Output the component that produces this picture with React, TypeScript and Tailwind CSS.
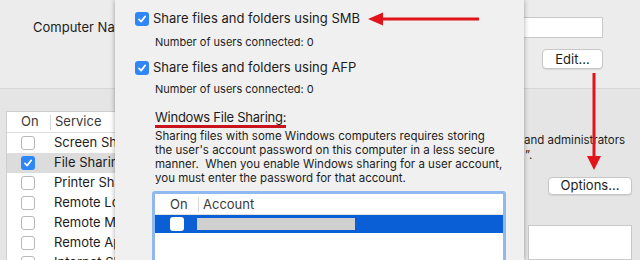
import React from 'react';

const font = { fontFamily: 'Inter, "Liberation Sans", Arial, sans-serif' };

const CheckBox: React.FC<{ checked?: boolean }> = ({ checked }) =>
  checked ? (
    <span className="flex h-[14px] w-[14px] shrink-0 items-center justify-center rounded-[3px] bg-[#2f86f6]">
      <svg width="10" height="10" viewBox="0 0 10 10">
        <path d="M2 5.4 L4.1 7.6 L8.2 2.4" fill="none" stroke="#fff" strokeWidth="1.7" strokeLinecap="round" strokeLinejoin="round" />
      </svg>
    </span>
  ) : (
    <span className="block h-[14px] w-[14px] shrink-0 rounded-[3px] border border-[#b9b9b9] bg-white" />
  );

const services = [
  { name: 'Screen Sharing', on: false },
  { name: 'File Sharing', on: true },
  { name: 'Printer Sharing', on: false },
  { name: 'Remote Login', on: false },
  { name: 'Remote Management', on: false },
  { name: 'Remote Apple Events', on: false },
  { name: 'Internet Sharing', on: false },
];

const App: React.FC = () => {
  return (
    <div className="relative h-[260px] w-[640px] overflow-hidden text-[#1c1c1c]" style={font}>
      {/* window behind the sheet */}
      <div className="h-[89px] border-b border-[#d6d6d6] bg-[#ececec]">
        <div className="flex items-center pt-[17px]">
          <span className="ml-[33px] text-[13px]">Computer Name:</span>
          <div className="ml-[10px] h-[21px] w-[456px] border border-[#c9c9c9] bg-white" />
        </div>
        <div className="mt-[11px] flex justify-end pr-[37px]">
          <button className="h-[20px] w-[61px] rounded-[4px] border border-[#c6c6c6] bg-white text-[13px] leading-none shadow-[0_1px_1px_rgba(0,0,0,0.08)]">
            Edit...
          </button>
        </div>
      </div>
      <div className="flex h-[171px] bg-[#e5e5e5]">
        <div className="ml-[6px] mt-[22px] w-[320px] self-start border-l border-t border-[#cfcfcf] bg-white">
          <div className="flex h-[21px] items-center border-b border-[#dedede] text-[13px] text-[#3a3a3a]">
            <span className="ml-[14px] w-[29px]">On</span>
            <span className="h-[15px] w-px bg-[#d8d8d8]" />
            <span className="ml-[4px]">Service</span>
          </div>
          {services.map((s) => (
            <div key={s.name} className={`flex h-[20px] items-center text-[13px] ${s.on ? 'bg-[#dcdcdc]' : ''}`}>
              <span className="ml-[14px]">
                <CheckBox checked={s.on} />
              </span>
              <span className="ml-[19px] whitespace-nowrap">{s.name}</span>
            </div>
          ))}
        </div>
        <div className="ml-[198px] flex w-[116px] flex-col">
          <div className="pt-[44px] text-[11.5px] leading-[15px] whitespace-nowrap">
            <div>and administrators</div>
            <div className="ml-[1px]">”.</div>
          </div>
          <button className="ml-[24px] mt-[14px] h-[20px] w-[84px] rounded-[4px] border border-[#c6c6c6] bg-white text-[13px] leading-none shadow-[0_1px_1px_rgba(0,0,0,0.08)]">
            Options...
          </button>
          <div className="ml-[4px] mt-[30px] h-[40px] w-[104px] border border-[#c9c9c9] bg-white" />
        </div>
      </div>

      {/* sheet */}
      <div className="absolute left-[115px] top-0 h-[260px] w-[409px] bg-[#f0f0f0] shadow-[0_0_5px_rgba(0,0,0,0.35)]">
        <div className="pl-[20px]">
          <div className="mt-[12px] flex h-[14px] items-center gap-[4px]">
            <CheckBox checked />
            <span className="text-[13px]">Share files and folders using SMB</span>
          </div>
          <div className="ml-[20px] mt-[9px] text-[11px] leading-[14px]">Number of users connected: 0</div>
          <div className="mt-[12px] flex h-[14px] items-center gap-[4px]">
            <CheckBox checked />
            <span className="text-[13px]">Share files and folders using AFP</span>
          </div>
          <div className="ml-[20px] mt-[7px] text-[11px] leading-[14px]">Number of users connected: 0</div>
          <div className="ml-[20px] mt-[13px] flex">
            <span className="border-b-[3px] border-[#c8141c] text-[13px] leading-[16px] tracking-[-0.25px]">Windows File Sharing:</span>
          </div>
          <div className="ml-[20px] mt-[1px] text-[11.5px] leading-[14px] whitespace-nowrap">
            <div>Sharing files with some Windows computers requires storing</div>
            <div>the user's account password on this computer in a less secure</div>
            <div>manner.&nbsp; When you enable Windows sharing for a user account,</div>
            <div>you must enter the password for that account.</div>
          </div>
          <div className="ml-[17px] mt-[6px] h-[80px] w-[354px] rounded-[3px] border-[3px] border-[#8fb9ef] bg-white">
            <div className="flex h-[21px] items-center border-b border-[#e1e1e1] text-[13px] leading-[16px] text-[#3a3a3a]">
              <span className="ml-[15px] w-[28px]">On</span>
              <span className="h-[15px] w-px bg-[#d8d8d8]" />
              <span className="ml-[4px]">Account</span>
            </div>
            <div className="flex h-[18px] items-center bg-[#0b5fd6]">
              <span className="ml-[15px] block h-[14px] w-[14px] rounded-[3px] bg-white" />
              <span className="ml-[13px] h-[12px] w-[158px] bg-[#d0d0d0]" />
            </div>
          </div>
        </div>
      </div>

      {/* annotation arrows */}
      <svg className="pointer-events-none absolute left-0 top-0" width="640" height="260" viewBox="0 0 640 260">
        <line x1="479" y1="19" x2="380" y2="19" stroke="#e0141a" strokeWidth="3" />
        <polygon points="368,19 383,12.5 383,25.5" fill="#e0141a" />
        <line x1="594" y1="73" x2="594" y2="158" stroke="#e0141a" strokeWidth="3" />
        <polygon points="594,170 587,156 601,156" fill="#e0141a" />
      </svg>
    </div>
  );
};

export default App;
